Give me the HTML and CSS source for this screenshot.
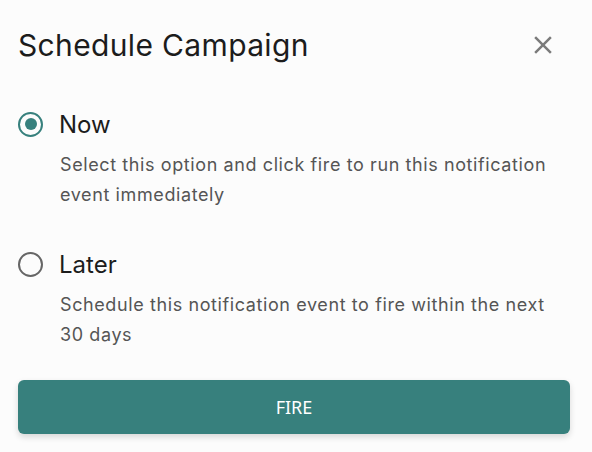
FILE: index.html
```html
<!DOCTYPE html>
<html lang="en">
<head>
  <meta charset="UTF-8">
  <meta name="viewport" content="width=device-width, initial-scale=1.0">
  <title>Schedule Campaign</title>
  <link rel="stylesheet" href="styles.css">
</head>
<body>

  <div class="dialog">
    <div class="header">
      <h2>Schedule Campaign</h2>
      <button class="close" aria-label="Close">
        <svg width="30" height="30" viewBox="0 0 24 24">
          <path d="M19 6.41 17.59 5 12 10.59 6.41 5 5 6.41 10.59 12 5 17.59 6.41 19 12 13.41 17.59 19 19 17.59 13.41 12z" fill="#7b7b7b"/>
        </svg>
      </button>
    </div>

    <div class="options">
      <label class="option">
        <span class="radio checked"><span class="dot"></span></span>
        <span class="label">Now</span>
      </label>
      <p class="desc">Select this option and click fire to run this notification event immediately</p>

      <label class="option later">
        <span class="radio"></span>
        <span class="label">Later</span>
      </label>
      <p class="desc">Schedule this notification event to fire within the next 30 days</p>
    </div>

    <button class="fire">FIRE</button>
  </div>

</body>
</html>
```

FILE: styles.css
```css
body {
  margin: 0;
  background: #fcfcfc;
  font-family: Inter, "Noto Sans", sans-serif;
  color: #1c1c1c;
}
.dialog {
  padding: 25px 22px 18px 18px;
}
.header {
  display: flex;
  justify-content: space-between;
  align-items: center;
}
h2 {
  margin: 0;
  font-size: 30px;
  font-weight: 400;
  line-height: 40px;
  letter-spacing: 0.35px;
}
.close {
  background: none;
  border: none;
  padding: 0;
  margin-right: 12px;
  width: 30px;
  height: 30px;
  display: flex;
}
.options {
  margin-top: 44px;
}
.option {
  display: flex;
  align-items: center;
  height: 30px;
}
.option.later {
  margin-top: 39px;
}
.radio {
  width: 25px;
  height: 25px;
  border: 2.5px solid #666;
  border-radius: 50%;
  box-sizing: border-box;
  display: flex;
  align-items: center;
  justify-content: center;
}
.radio.checked {
  border-color: #37807d;
}
.dot {
  width: 12px;
  height: 12px;
  border-radius: 50%;
  background: #37807d;
}
.label {
  font-size: 24px;
  margin-left: 16px;
}
.desc {
  margin: 11px 20px 0 42px;
  font-size: 18px;
  line-height: 30px;
  color: #555;
  letter-spacing: 0.6px;
}
.fire {
  display: block;
  width: 100%;
  height: 54px;
  margin-top: 30px;
  border: none;
  border-radius: 6px;
  background: #37807d;
  color: #fff;
  font-family: "Noto Sans", sans-serif;
  font-size: 18px;
  box-shadow: 0 3px 6px rgba(0, 0, 0, 0.15);
}
```
